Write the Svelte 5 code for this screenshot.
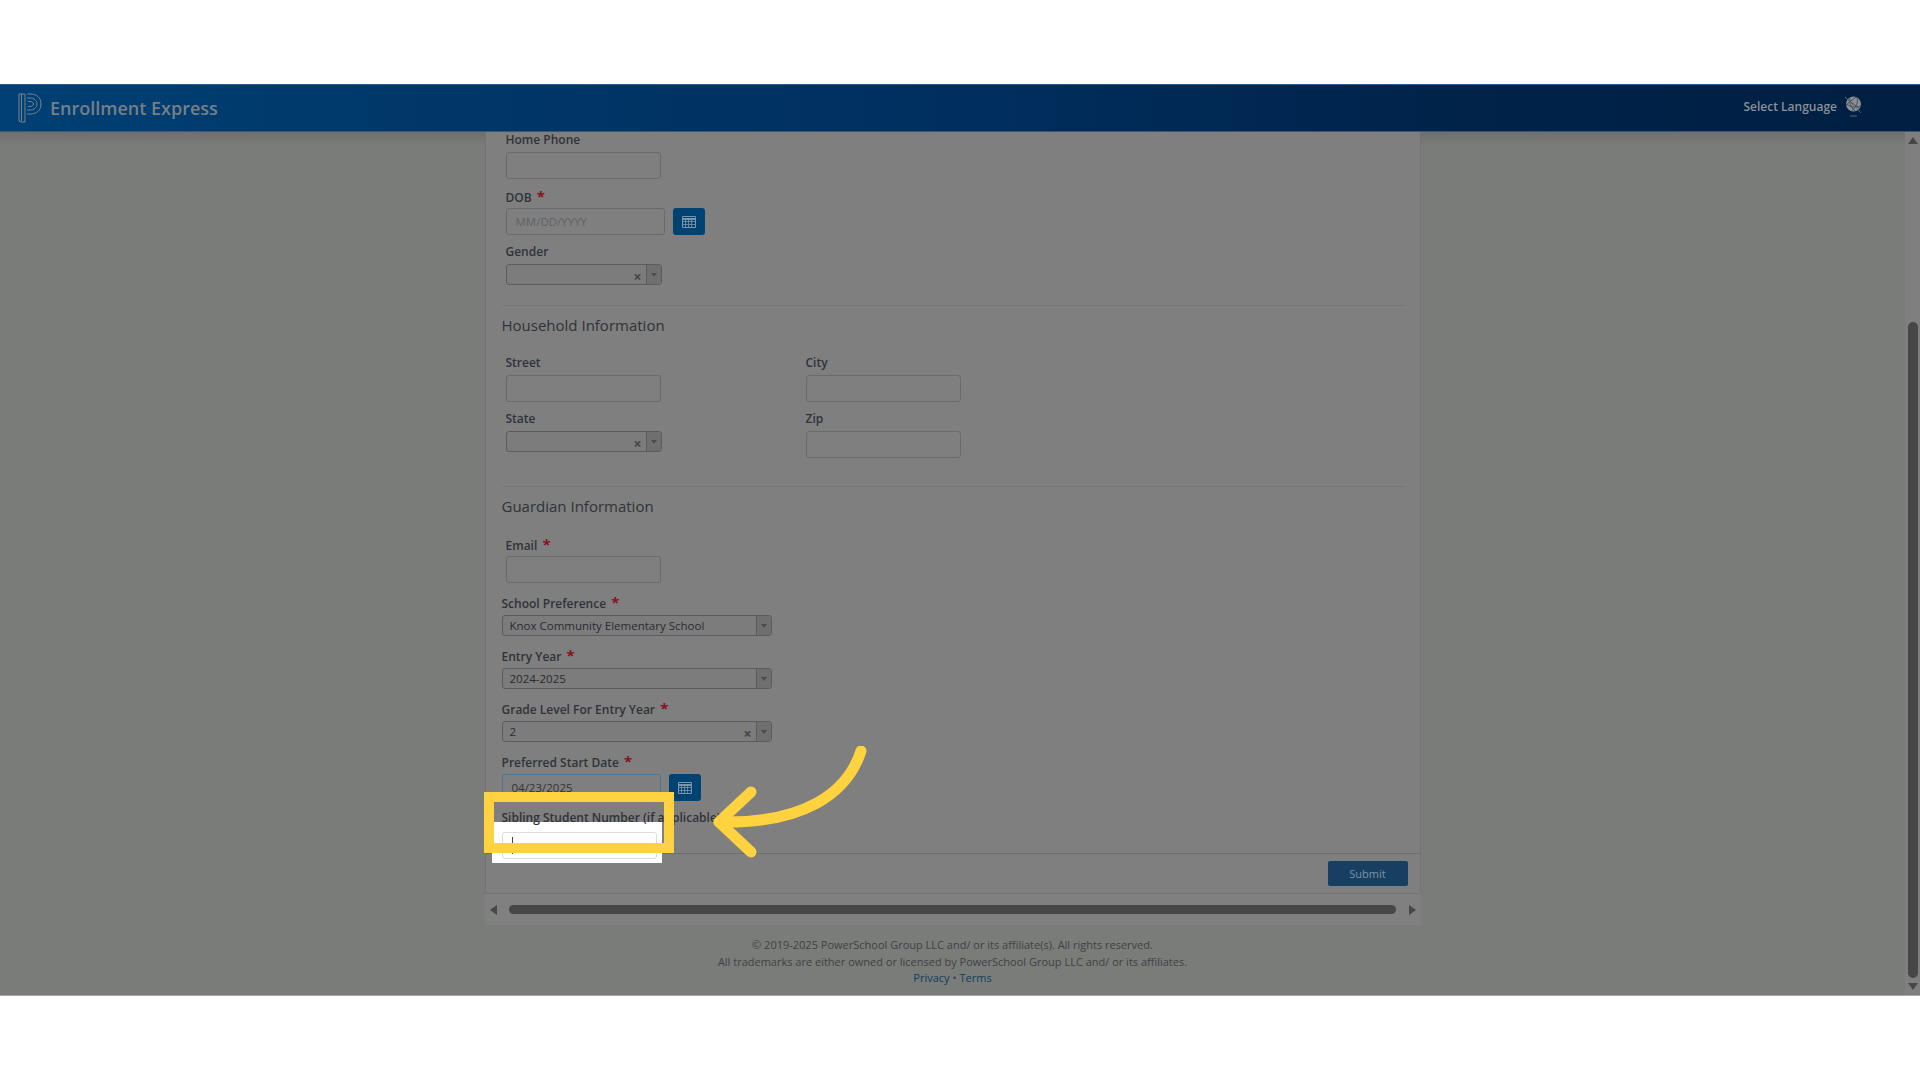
<script>
  // Screenshot of the enrollment form with the tutorial dimming and callout on top
</script>

{#snippet calBtn()}
  <button class="cal" aria-label="Open calendar">
    <svg width="14" height="12" viewBox="0 0 14 12" fill="none" stroke="#7d95ab" stroke-width="1">
      <path d="M.5.5h13v11H.5z" />
      <path d="M.5 3h13" stroke-width="2" />
      <path d="M.5 5.5h13M.5 8.5h13M3.5 4v8M6.5 4v8M9.5 4v8" stroke-width=".8" />
    </svg>
  </button>
{/snippet}

{#snippet select(value, clear, cls)}
  <div class="select {cls}">
    <span class="val">{value}</span>
    {#if clear}<span class="clear">×</span>{/if}
    <span class="arrow"><i></i></span>
  </div>
{/snippet}

{#snippet req(text)}
  <label class="lbl">{text} <b class="star">*</b></label>
{/snippet}

<div class="screen">
  <div class="top"></div>

  <header>
    <div class="brand">
      <svg class="logo" width="24" height="30" viewBox="0 0 24 30" fill="none" stroke="#77838f" stroke-width="1">
        <path d="M1 1h6v28H3l-2-1z" />
        <path d="M3.5 1v27" />
        <path d="M9 1h3c7 0 11 4 11 10s-4 10-11 10H9" />
        <path d="M9 5h3c4 0 7 2.500 7 6s-3 6-7 6H9" />
        <path d="M10 8.500h2c2 0 3.500 1 3.500 2.500s-1.500 2.500-3.500 2.500h-2" />
      </svg>
      <span>Enrollment Express</span>
    </div>
    <div class="lang">
      <span>Select Language</span>
      <svg width="19" height="23" viewBox="0 0 19 23" fill="none">
        <circle cx="9.500" cy="9" r="7.500" fill="#8d8f92" />
        <path d="M3 4l13 10M2.500 9c4 3 9 4 14 2M6 2.500c-1 5 1 10 5 13.500M13 2.500c1.500 5-1 10-5 13M2 10L12 2" stroke="#3d4a5c" stroke-width=".9" />
        <path d="M1 2l16 16M6 21h7" stroke="#687480" stroke-width=".8" />
      </svg>
    </div>
  </header>

  <main>
    <div class="center">
      <div class="panel">
        <div class="form">
          <section class="sec-a">
            <div class="field">
              <label class="lbl">Home Phone</label>
              <input class="inp" aria-label="Home Phone" />
            </div>
            <div class="field">
              {@render req('DOB')}
              <div class="with-btn">
                <div class="inp date ph">MM/DD/YYYY</div>
                {@render calBtn()}
              </div>
            </div>
            <div class="field">
              <label class="lbl">Gender</label>
              {@render select('', true, 'short')}
            </div>
          </section>

          <hr />
          <h2>Household Information</h2>
          <section class="grid">
            <div class="field">
              <label class="lbl">Street</label>
              <input class="inp" aria-label="Street" />
            </div>
            <div class="field">
              <label class="lbl">City</label>
              <input class="inp" aria-label="City" />
            </div>
            <div class="field">
              <label class="lbl">State</label>
              {@render select('', true, 'short')}
            </div>
            <div class="field">
              <label class="lbl">Zip</label>
              <input class="inp" aria-label="Zip" />
            </div>
          </section>

          <hr class="hr2" />
          <h2>Guardian Information</h2>
          <section class="sec-a email">
            <div class="field">
              {@render req('Email')}
              <input class="inp" aria-label="Email" />
            </div>
          </section>

          <section class="sec-b">
            <div class="sfield">
              {@render req('School Preference')}
              {@render select('Knox Community Elementary School', false, 'wide')}
            </div>
            <div class="sfield">
              {@render req('Entry Year')}
              {@render select('2024-2025', false, 'wide')}
            </div>
            <div class="sfield">
              {@render req('Grade Level For Entry Year')}
              {@render select('2', true, 'wide')}
            </div>
            <div class="sfield">
              {@render req('Preferred Start Date')}
              <div class="with-btn">
                <div class="inp date2 focus">04/23/2025</div>
                {@render calBtn()}
              </div>
            </div>
            <div class="sfield last">
              <div class="cutout"></div>
              <label class="lbl over">Sibling Student Number (if applicable)</label>
              <div class="inp live"><span class="caret"></span></div>
            </div>
          </section>
        </div>

        <div class="actions">
          <button class="submit">Submit</button>
        </div>
      </div>

      <div class="hbar">
        <span class="tri left"></span>
        <span class="hthumb"></span>
        <span class="tri right"></span>
      </div>

      <footer>
        <div>© 2019-2025 PowerSchool Group LLC and/ or its affiliate(s). All rights reserved.</div>
        <div>All trademarks are either owned or licensed by PowerSchool Group LLC and/ or its affiliates.</div>
        <div><a href="#privacy">Privacy</a> • <a href="#terms">Terms</a></div>
      </footer>
    </div>

    <div class="vbar">
      <span class="tri up"></span>
      <span class="vthumb"></span>
      <span class="tri down"></span>
    </div>
  </main>

  <div class="bottom"></div>

  <!-- tutorial callout -->
  <div class="frame"></div>
  <svg class="callout" width="180" height="125" viewBox="0 0 180 125" fill="none" stroke="#ffd23f" stroke-width="11" stroke-linecap="round" stroke-linejoin="round">
    <path d="M150 5C136 48 92 78 8 76" />
    <path d="M40 46L8 76l32 30" />
  </svg>
</div>

<style>
  :global(body) {
    margin: 0;
    background: #fff;
  }

  .screen {
    position: relative;
    width: 1920px;
    height: 1080px;
    overflow: hidden;
    display: flex;
    flex-direction: column;
    font-family: "Open Sans", "Liberation Sans", sans-serif;
    color: #2f3338;
  }

  .top {
    height: 84px;
    background: #fff;
  }

  .bottom {
    flex: 1;
    background: #fff;
    border-top: 1px solid #a8a8a8;
  }

  header {
    height: 48px;
    box-sizing: border-box;
    display: flex;
    align-items: center;
    justify-content: space-between;
    padding: 0 57px 0 18px;
    background: linear-gradient(90deg, #004074 0%, #00386a 20%, #002f5f 50%, #00234a 75%, #001f42 100%);
    border-top: 1px solid #2c5d8a;
    border-bottom: 1px solid #3c5773;
  }

  .brand {
    display: flex;
    align-items: center;
    gap: 8px;
    color: #777f87;
    font-size: 18px;
    font-weight: 600;
  }

  .lang {
    display: flex;
    align-items: center;
    gap: 7px;
    margin-top: -4px;
    color: #8a9199;
    font-size: 12px;
    font-weight: 600;
  }

  main {
    height: 863px;
    display: flex;
    background: linear-gradient(180deg, #6f706e 0, #7a7c7a 14px);
  }

  .center {
    flex: 1;
    display: flex;
    flex-direction: column;
    align-items: center;
  }

  .panel {
    width: 936px;
    height: 762px;
    box-sizing: border-box;
    background: #7f7f7f;
    border: 1px solid #737373;
    border-top: 0;
    display: flex;
    flex-direction: column;
  }

  .form {
    height: 721px;
    padding-left: 16px;
    padding-right: 15px;
  }

  .lbl {
    display: block;
    height: 18px;
    line-height: 18px;
    font-size: 12px;
    font-weight: 600;
    color: #2f3338;
  }

  .star {
    color: #8c1020;
    font-size: 15px;
    font-weight: 700;
    margin-left: 2px;
  }

  .inp {
    display: block;
    box-sizing: border-box;
    width: 155px;
    height: 27px;
    padding: 0 9px;
    background: transparent;
    border: 1px solid #6a6a6a;
    border-radius: 3px;
    font: 400 11.5px/25px "Open Sans", sans-serif;
    color: #333;
    outline: 0;
  }

  .date {
    width: 159px;
  }

  .date2 {
    width: 159px;
  }

  .ph {
    color: #5f6468;
  }

  .focus {
    border-color: #4a7596;
  }

  .with-btn {
    display: flex;
    gap: 8px;
  }

  .cal {
    width: 32px;
    height: 27px;
    padding: 0;
    border: 0;
    border-radius: 3px;
    background: #004272;
    display: flex;
    align-items: center;
    justify-content: center;
  }

  .sec-a {
    padding-left: 4px;
    padding-top: 0;
    margin-top: -1px;
  }

  .field {
    margin-bottom: 8px;
  }

  .field .lbl {
    margin-bottom: 3px;
  }

  .select {
    position: relative;
    box-sizing: border-box;
    height: 21px;
    border: 1px solid #5c5c5c;
    border-radius: 3px;
    background: #7c7c7c;
    font-size: 11.5px;
    line-height: 19px;
    padding-left: 7px;
    color: #2a2a30;
  }

  .short {
    width: 156px;
  }

  .wide {
    width: 270px;
  }

  .clear {
    position: absolute;
    right: 19px;
    top: 2px;
    color: #444;
    font-size: 14px;
    font-weight: 700;
    line-height: 19px;
  }

  .arrow {
    position: absolute;
    right: 0;
    top: 0;
    bottom: 0;
    width: 14px;
    background: #6f6f6f;
    border-left: 1px solid #5c5c5c;
    border-radius: 0 2px 2px 0;
    display: flex;
    align-items: center;
    justify-content: center;
  }

  .arrow i {
    width: 0;
    height: 0;
    border-left: 3px solid transparent;
    border-right: 3px solid transparent;
    border-top: 4px solid #4c4c4c;
  }

  hr {
    margin: 20px 0 0;
    border: 0;
    border-top: 1px dotted #6c6c6c;
  }

  .hr2 {
    margin-top: 20px;
  }

  h2 {
    margin: 7px 0 0;
    height: 24px;
    line-height: 24px;
    font-size: 15px;
    font-weight: 400;
    color: #2f3338;
  }

  .grid {
    display: grid;
    grid-template-columns: 300px 300px;
    padding-left: 4px;
    margin-top: 17px;
  }

  .email {
    margin-top: 17px;
    margin-bottom: 0;
  }

  .email .field {
    margin-bottom: 0;
  }

  .sec-b {
    margin-top: 0;
  }

  .sfield {
    position: relative;
    margin-top: 10px;
  }

  .sfield .lbl {
    margin-bottom: 4px;
  }

  .sfield .inp {
    color: #333;
  }

  .last {
    margin-top: 8px;
  }

  /* white spot left by the dimming layer, under the label */
  .cutout {
    position: absolute;
    left: -10px;
    top: 13px;
    width: 170px;
    height: 41px;
    background: #fff;
  }

  .over {
    position: relative;
  }

  .live {
    position: relative;
    background: #fff;
    border: 1px solid #dcdcdc;
    margin-top: 5px;
    height: 27px;
  }

  .caret {
    position: absolute;
    left: 9px;
    top: 4px;
    width: 1px;
    height: 17px;
    background: #444;
  }

  .actions {
    flex: 1;
    display: flex;
    justify-content: flex-end;
    align-items: flex-start;
    padding: 7px 12px 0 0;
    border-top: 1px solid #6f6f6f;
  }

  .submit {
    width: 80px;
    height: 25px;
    border: 0;
    border-radius: 2px;
    background: #173f62;
    color: #7f93a4;
    font: 400 11px "Open Sans", sans-serif;
  }

  .hbar {
    width: 936px;
    height: 31px;
    background: #808080;
    display: flex;
    align-items: center;
    box-sizing: border-box;
    padding: 0 5px;
  }

  .hthumb {
    width: 889px;
    height: 9px;
    margin: 0 13px 0 12px;
    border-radius: 5px;
    background: #474747;
  }

  .tri {
    width: 0;
    height: 0;
    display: block;
  }

  .left {
    border-top: 5px solid transparent;
    border-bottom: 5px solid transparent;
    border-right: 7px solid #474747;
  }

  .right {
    border-top: 5px solid transparent;
    border-bottom: 5px solid transparent;
    border-left: 7px solid #474747;
  }

  .up {
    border-left: 5px solid transparent;
    border-right: 5px solid transparent;
    border-bottom: 7px solid #474747;
  }

  .down {
    border-left: 5px solid transparent;
    border-right: 5px solid transparent;
    border-top: 7px solid #474747;
  }

  footer {
    margin-top: 12px;
    text-align: center;
    font-size: 11px;
    line-height: 16.500px;
    color: #3f4144;
  }

  footer a {
    color: #0f3d5f;
    text-decoration: none;
  }

  .vbar {
    width: 15px;
    display: flex;
    flex-direction: column;
    align-items: center;
    background: #7f7f7f;
    padding-top: 5px;
  }

  .vthumb {
    width: 10px;
    height: 656px;
    margin: 178px 0 5px;
    border-radius: 5px;
    background: #474747;
  }

  .frame {
    position: absolute;
    left: 484px;
    top: 792px;
    width: 190px;
    height: 61px;
    box-sizing: border-box;
    border: 10px solid #ffd23f;
  }

  .callout {
    position: absolute;
    left: 711px;
    top: 746px;
  }
</style>
